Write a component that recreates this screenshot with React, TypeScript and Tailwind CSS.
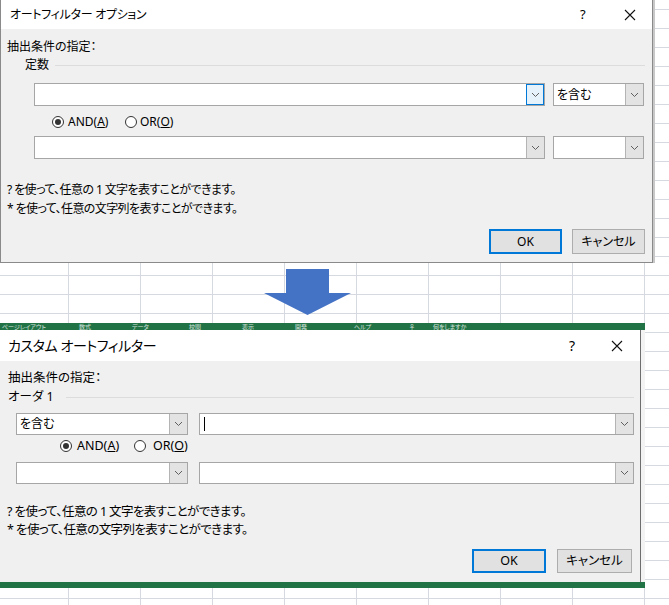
import React from "react";

const FONT = "font-['Noto_Sans','Noto_Sans_CJK_JP',sans-serif] [font-feature-settings:'palt']";

function Chevron() {
  return (
    <svg width="9" height="6" viewBox="0 0 9 6" fill="none">
      <path d="M1 1l3.5 3.5L8 1" stroke="#5f5f5f" strokeWidth="1" />
    </svg>
  );
}

function CloseIcon() {
  return (
    <svg width="12" height="12" viewBox="0 0 12 12" fill="none">
      <path d="M1 1l10 10M11 1L1 11" stroke="#111" strokeWidth="1.1" />
    </svg>
  );
}

type ComboProps = {
  className: string;
  text?: string;
  focused?: boolean;
  caret?: boolean;
};

function Combo({ className, text, focused, caret }: ComboProps) {
  return (
    <div className={`flex border border-[#a6a6a6] bg-white ${className}`}>
      <div className="flex flex-1 items-center pl-[3px] text-[12px] text-black">
        {caret && <span className="ml-[1px] h-[14px] w-px bg-black" />}
        {text}
      </div>
      {focused ? (
        <div className="flex w-[18px] items-center justify-center border border-[#0078d7] bg-[#e5f1fb]">
          <Chevron />
        </div>
      ) : (
        <div className="flex w-[18px] items-center justify-center border-l border-[#b4b4b4] bg-[#e3e3e3]">
          <Chevron />
        </div>
      )}
    </div>
  );
}

function Radio({ checked }: { checked?: boolean }) {
  return (
    <span className="flex size-[12px] shrink-0 items-center justify-center rounded-full border border-[#333] bg-white">
      {checked && <span className="size-[6px] rounded-full bg-[#333]" />}
    </span>
  );
}

function TopDialog() {
  return (
    <div className="flex h-[263px] w-[653px] flex-col border-l border-b border-r border-[#8a8a8a] shadow-[2px_0_0_#c8c8c8]">
      <div className="flex h-[29px] items-center bg-white pl-[9px] text-[12px] tracking-[-0.3px] text-black">
        <span className="flex-1">オートフィルター オプション</span>
        <span className="w-[14px] text-[13px]">?</span>
        <span className="ml-[30px] mr-[16px]">
          <CloseIcon />
        </span>
      </div>
      <div className="flex flex-1 flex-col bg-[#f0f0f0] text-[12px] text-black">
        <div className="mt-[9px] flex h-[18px] items-center pl-[6px]">抽出条件の指定：</div>
        <div className="flex h-[18px] items-center pl-[24px] pr-[7px]">
          <span>定数</span>
          <span className="ml-[6px] h-px flex-1 bg-[#dcdcdc]" />
        </div>
        <div className="mt-[9px] flex gap-[8px] pl-[33px]">
          <Combo className="h-[23px] w-[511px]" focused />
          <Combo className="h-[23px] w-[91px]" text="を含む" />
        </div>
        <div className="mt-[7px] flex h-[18px] items-center pl-[51px]">
          <Radio checked />
          <span className="ml-[4px] w-[57px]">
            AND(<span className="underline">A</span>)
          </span>
          <Radio />
          <span className="ml-[3px]">
            OR(<span className="underline">O</span>)
          </span>
        </div>
        <div className="mt-[5px] flex gap-[8px] pl-[33px]">
          <Combo className="h-[23px] w-[511px]" />
          <Combo className="h-[23px] w-[91px]" />
        </div>
        <div className="mt-[22px] flex h-[18px] items-center pl-[6px] tracking-[-0.6px]">
          ? を使って、任意の 1 文字を表すことができます。
        </div>
        <div className="mt-[1px] flex h-[18px] items-center pl-[6px] tracking-[-0.6px]">
          * を使って、任意の文字列を表すことができます。
        </div>
        <div className="mt-[11px] flex justify-end gap-[10px] pr-[7px]">
          <button className="flex h-[25px] w-[73px] items-center justify-center border-2 border-[#0078d7] bg-[#e1e1e1] text-[12px]">
            OK
          </button>
          <button className="flex h-[25px] w-[73px] items-center justify-center border border-[#adadad] bg-[#e1e1e1] text-[12px]">
            キャンセル
          </button>
        </div>
      </div>
    </div>
  );
}

function BottomDialog() {
  return (
    <div className="flex h-[252px] w-[641px] flex-col border-r border-[#6e6e6e]">
      <div className="flex h-[31px] items-center bg-white pl-[8px] text-[14px] tracking-[-0.4px] text-black">
        <span className="flex-1">カスタム オートフィルター</span>
        <span className="w-[14px] text-[14px]">?</span>
        <span className="ml-[28px] mr-[17px]">
          <CloseIcon />
        </span>
      </div>
      <div className="flex flex-1 flex-col bg-[#f0f0f0] text-[12.5px] text-black">
        <div className="mt-[8px] flex h-[18px] items-center pl-[8px]">抽出条件の指定：</div>
        <div className="mt-[1px] flex h-[18px] items-center pl-[8px] pr-[6px]">
          <span>オーダ 1</span>
          <span className="ml-[12px] h-px flex-1 bg-[#dcdcdc]" />
        </div>
        <div className="mt-[7px] flex gap-[11px] pl-[16px]">
          <Combo className="h-[22px] w-[172px]" text="を含む" />
          <Combo className="h-[22px] w-[435px]" caret />
        </div>
        <div className="mt-[2px] flex h-[18px] items-center pl-[60px]">
          <Radio checked />
          <span className="ml-[5px] w-[57px]">
            AND(<span className="underline">A</span>)
          </span>
          <Radio />
          <span className="ml-[7px]">
            OR(<span className="underline">O</span>)
          </span>
        </div>
        <div className="mt-[7px] flex gap-[11px] pl-[16px]">
          <Combo className="h-[22px] w-[172px]" />
          <Combo className="h-[22px] w-[435px]" />
        </div>
        <div className="mt-[19px] flex h-[18px] items-center pl-[7px] tracking-[-0.6px]">
          ? を使って、任意の 1 文字を表すことができます。
        </div>
        <div className="flex h-[18px] items-center pl-[7px] tracking-[-0.6px]">
          * を使って、任意の文字列を表すことができます。
        </div>
        <div className="mt-[10px] flex justify-end gap-[11px] pr-[8px]">
          <button className="flex h-[24px] w-[74px] items-center justify-center border-2 border-[#0078d7] bg-[#e1e1e1] text-[12.5px]">
            OK
          </button>
          <button className="flex h-[24px] w-[75px] items-center justify-center border border-[#adadad] bg-[#e1e1e1] text-[12.5px]">
            キャンセル
          </button>
        </div>
      </div>
    </div>
  );
}

function RibbonBand() {
  const tabs: [string, string][] = [
    ["w-[77px]", "ページレイアウト"],
    ["w-[53px]", "数式"],
    ["w-[57px]", "データ"],
    ["w-[53px]", "校閲"],
    ["w-[53px]", "表示"],
    ["w-[59px]", "開発"],
    ["w-[55px]", "ヘルプ"],
    ["w-[24px]", "♀"],
    ["w-[80px]", "何をしますか"],
  ];
  return (
    <div className="flex h-[7px] w-[645px] items-end bg-[#217346] pl-[2px] text-[6px] leading-none text-white/80">
      {tabs.map(([w, t]) => (
        <span key={t} className={`shrink-0 ${w}`}>
          {t}
        </span>
      ))}
    </div>
  );
}

export default function App() {
  return (
    <div
      className={`relative h-[605px] w-[669px] overflow-hidden bg-white ${FONT} [background-image:linear-gradient(to_bottom,transparent_18px,#d6dae0_18px),linear-gradient(to_right,transparent_71px,#d6dae0_71px)] [background-size:100%_19px,72px_100%] [background-position:0_10px,69px_0]`}
    >
      <TopDialog />
      <div className="flex h-[60px] pl-[264px] pt-[6px]">
        <svg width="88" height="47" viewBox="0 0 88 47">
          <polygon points="22,0 65,0 65,24 87,24 43.5,46 0,24 22,24" fill="#4472c4" />
        </svg>
      </div>
      <RibbonBand />
      <div className="flex">
        <BottomDialog />
        <div className="h-[252px] w-[4px] bg-[#f3f3f3]" />
      </div>
      <div className="h-[6px] w-[645px] bg-[#217346]" />
    </div>
  );
}
